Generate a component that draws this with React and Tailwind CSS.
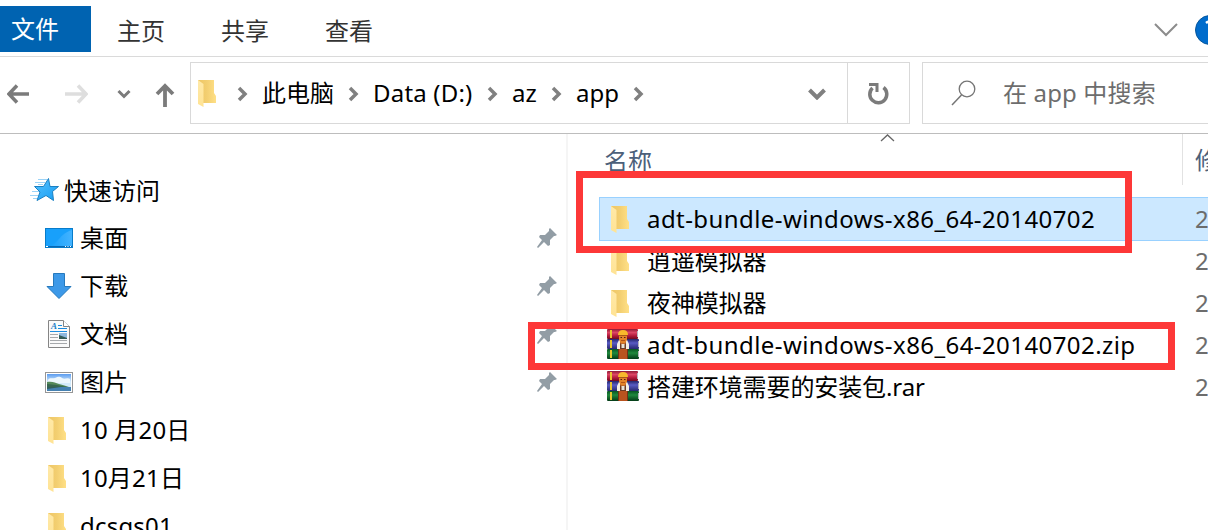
const FolderIcon = () => (
  <svg width="20" height="28" viewBox="0 0 20 28" className="shrink-0">
    <defs>
      <linearGradient id="folderBack" x1="0" y1="0" x2="1" y2="0">
        <stop offset="0" stopColor="#eec665" />
        <stop offset="0.5" stopColor="#f3cf71" />
        <stop offset="1" stopColor="#ffe087" />
      </linearGradient>
      <linearGradient id="folderFlap" x1="0" y1="0" x2="0" y2="1">
        <stop offset="0" stopColor="#ffe9a8" />
        <stop offset="1" stopColor="#ffe394" />
      </linearGradient>
    </defs>
    <path d="M1 1H17V14L19 17V24H1Z" fill="url(#folderBack)" />
    <path d="M1 1L6.500 5V28L1 25Z" fill="url(#folderFlap)" />
  </svg>
);

const StarIcon = () => (
  <svg width="30" height="26" viewBox="0 0 30 26" className="shrink-0">
    <defs>
      <linearGradient id="starFill" x1="0" y1="0" x2="1" y2="1">
        <stop offset="0" stopColor="#55c1ff" />
        <stop offset="1" stopColor="#179df2" />
      </linearGradient>
    </defs>
    <path
      d="M18.500 1.500L20 9.500H28.500L22.500 14.500L23.500 23.500L16 18.500L7 23.500L10 15L4.500 9.500H13.500Z"
      fill="url(#starFill)"
      stroke="#1b80c2"
      strokeWidth="1"
    />
    <path d="M8 2.500H17M5 5.500H15M8 7.500H13M2 14.500H9M0 18.500H8M3 21.500H7" stroke="#9bd3f7" strokeWidth="1" />
  </svg>
);

const DesktopIcon = () => (
  <svg width="28" height="20" viewBox="0 0 28 20" className="shrink-0">
    <defs>
      <linearGradient id="screenShine" x1="0" y1="0" x2="1" y2="0">
        <stop offset="0" stopColor="#18a0fb" />
        <stop offset="1" stopColor="#43b3ff" />
      </linearGradient>
    </defs>
    <rect x="0.500" y="0.500" width="27" height="19" fill="#18a0fb" stroke="#087cca" />
    <path d="M5 18C14 15 14 6 27 2V18Z" fill="url(#screenShine)" />
    <path d="M1 18.500H27" stroke="#0868b4" />
    <path d="M1 18.500H3M20 18.500H21M22.500 18.500H23.500M25 18.500H26" stroke="#fff" />
  </svg>
);

const DownloadIcon = () => (
  <svg width="28" height="28" viewBox="0 0 28 28" className="shrink-0">
    <path d="M8.500 1.500H19.500V14.500H26L14 26.500L2 14.500H8.500Z" fill="#3d99e8" stroke="#2679bd" />
  </svg>
);

const DocumentIcon = () => (
  <svg width="22" height="28" viewBox="0 0 22 28" className="shrink-0">
    <path d="M0.500 0.500H15L21.500 6.500V27.500H0.500Z" fill="#fafafa" stroke="#858585" />
    <path d="M15.500 0.500V6.500H21.500" fill="#fff" stroke="#858585" />
    <text x="3" y="9" fontSize="9" fontWeight="bold" fontStyle="italic" fontFamily="Liberation Serif, serif" fill="#1a80c8">A</text>
    <path d="M10 5.500H14M10 8.500H19M2 11.500H19" stroke="#1a8ce0" />
    <path d="M2 14.500H10M2 17.500H10M2 20.500H19M2 23.500H19" stroke="#a6a9ac" />
    <rect x="11" y="13" width="8" height="6" fill="#8fb9df" />
    <path d="M11 15L19 18V19H11Z" fill="#345d58" />
  </svg>
);

const PictureIcon = () => (
  <svg width="28" height="21" viewBox="0 0 28 21" className="shrink-0">
    <defs>
      <linearGradient id="sky" x1="0" y1="0" x2="0" y2="1">
        <stop offset="0" stopColor="#5b9cf0" />
        <stop offset="0.6" stopColor="#d4ebfb" />
        <stop offset="1" stopColor="#d4ebfb" />
      </linearGradient>
    </defs>
    <rect x="0.500" y="0.500" width="27" height="20" fill="#fff" stroke="#969696" />
    <rect x="2" y="2" width="24" height="13" fill="url(#sky)" />
    <path d="M3 8C5 5 7 7 10 6S14 4 17 6S22 5 25 7V11H3Z" fill="#edf7fd" />
    <path d="M2 10C8 9 10 11 14 12S21 14 24 15H2Z" fill="#568a5b" />
    <path d="M2 12L12 13L22 15H2Z" fill="#386750" />
    <rect x="2" y="15" width="24" height="4" fill="#4581b1" />
    <path d="M2 15H16L2 17Z" fill="#335f5b" />
  </svg>
);

const RarIcon = () => (
  <svg width="32" height="31" viewBox="0 0 32 31" className="mb-0.5 shrink-0">
    <defs>
      <linearGradient id="bookRed" x1="0" y1="0" x2="0" y2="1">
        <stop offset="0" stopColor="#8e1a35" />
        <stop offset="0.35" stopColor="#dc4565" />
        <stop offset="0.7" stopColor="#b0183a" />
        <stop offset="1" stopColor="#6d0a20" />
      </linearGradient>
      <linearGradient id="bookBlue" x1="0" y1="0" x2="0" y2="1">
        <stop offset="0" stopColor="#242569" />
        <stop offset="0.4" stopColor="#595bc4" />
        <stop offset="1" stopColor="#28286f" />
      </linearGradient>
      <linearGradient id="bookGreen" x1="0" y1="0" x2="0" y2="1">
        <stop offset="0" stopColor="#075522" />
        <stop offset="0.4" stopColor="#20893d" />
        <stop offset="1" stopColor="#043b17" />
      </linearGradient>
    </defs>
    <rect x="0" y="0" width="31" height="10" rx="1" fill="url(#bookRed)" />
    <rect x="0" y="10" width="32" height="10" rx="1" fill="url(#bookBlue)" />
    <rect x="0" y="20" width="32" height="10" rx="1" fill="url(#bookGreen)" />
    <path d="M30.500 2V8M31.500 12V18M31.500 22V28" stroke="#b9b9c0" />
    <path d="M4 1V9M4 11V19M4 21V29" stroke="#e9c62e" strokeWidth="2" />
    <rect x="11" y="19" width="10" height="11" fill="#b9531f" />
    <path d="M11.500 20V30M20.500 20V30" stroke="#743016" />
    <path d="M10 15L12 11H20L22 15V20H10Z" fill="#f3eee3" />
    <path d="M13 12H19V20H13Z" fill="#c26a2a" />
    <path d="M13 14L16 17L19 14V20H13Z" fill="#6d3c25" />
    <path d="M12 6H20V11L18 14H14L12 11Z" fill="#e38429" />
    <path d="M11 6Q11 1 16 1T21 6Z" fill="#f8b92c" />
    <path d="M12 6.500H20" stroke="#a85a16" />
    <path d="M13.500 8.500H15M17 8.500H18.500" stroke="#512313" />
    <path d="M14 11.500H18" stroke="#b45418" />
    <rect x="14.500" y="15" width="3" height="4" fill="#e9e4d8" />
  </svg>
);

const PinIcon = () => (
  <svg width="20" height="20" viewBox="0 0 20 20" className="shrink-0">
    <path d="M13 0L20 7L18 8L17 8L13 12V17L11 18L7 14L1 20L0 19L5 12L2 9L3 7H8L12 3V1Z" fill="#929da5" />
  </svg>
);

const Crumb = ({ className }) => (
  <svg width="11" height="16" viewBox="0 0 11 16" className={`shrink-0 ${className}`}>
    <path d="M2 2L8 8L2 14" fill="none" stroke="#808080" strokeWidth="3.500" />
  </svg>
);

const quickItems = [
  { name: '桌面', icon: <DesktopIcon />, pinned: true },
  { name: '下载', icon: <DownloadIcon />, pinned: true },
  { name: '文档', icon: <DocumentIcon />, pinned: true },
  { name: '图片', icon: <PictureIcon />, pinned: true },
  { name: '10 月20日', icon: <FolderIcon />, folder: true },
  { name: '10月21日', icon: <FolderIcon />, folder: true },
  { name: 'dcsgs01', icon: <FolderIcon />, folder: true }
];

const files = [
  { name: 'adt-bundle-windows-x86_64-20140702', type: 'folder', selected: true, latin: true },
  { name: '逍遥模拟器', type: 'folder' },
  { name: '夜神模拟器', type: 'folder' },
  { name: 'adt-bundle-windows-x86_64-20140702.zip', type: 'archive', latin: true },
  { name: '搭建环境需要的安装包.rar', type: 'archive' }
];

const Ribbon = () => (
  <div className="flex h-[57px] items-start border-b border-[#dadada] pt-1.5 text-[#333]">
    <div className="flex h-[46px] w-[91px] shrink-0 items-center bg-[#0063b1] pl-[11px] text-white">文件</div>
    <div className="flex h-[50px] items-center gap-14 pl-[26px]">
      <span>主页</span>
      <span>共享</span>
      <span>查看</span>
    </div>
    <div className="ml-auto flex h-12 shrink-0 items-center">
      <svg width="24" height="14" viewBox="0 0 24 14" className="mr-[17px]">
        <path d="M1 1L12 12L23 1" fill="none" stroke="#8c8c8c" strokeWidth="2" />
      </svg>
      <svg width="13" height="30" viewBox="0 0 13 30">
        <circle cx="15" cy="15" r="14.500" fill="#006ccc" stroke="#07569b" />
        <path d="M11 8Q13 6.500 15 6.500" fill="none" stroke="#fff" strokeWidth="2.500" />
      </svg>
    </div>
  </div>
);

const AddressBar = () => (
  <div className="flex h-[77px] items-start border-b border-[#bdbdbd] pt-[5px]">
    <div className="flex h-[62px] w-[190px] shrink-0 items-center pt-0.5 pl-[7px]">
      <svg width="22" height="20" viewBox="0 0 22 20">
        <path d="M10 1.500L2 10L10 18.500M2 10H22" fill="none" stroke="#7b7b7b" strokeWidth="3.500" />
      </svg>
      <svg width="23" height="20" viewBox="0 0 23 20" className="ml-9">
        <path d="M13 1.500L21 10L13 18.500M0 10H21" fill="none" stroke="#dedede" strokeWidth="3.500" />
      </svg>
      <svg width="14" height="10" viewBox="0 0 14 10" className="ml-[29px]">
        <path d="M1.500 2L7 7.500L12.500 2" fill="none" stroke="#7b7b7b" strokeWidth="3" />
      </svg>
      <svg width="20" height="24" viewBox="0 0 20 24" className="mt-0.5 ml-6">
        <path d="M2 11L10 3L18 11M10 3V24" fill="none" stroke="#7b7b7b" strokeWidth="3.800" />
      </svg>
    </div>
    <div className="flex h-[62px] w-[720px] shrink-0 border border-[#d9d9d9]">
      <div className="flex flex-1 items-center pl-1.5 text-black">
        <FolderIcon />
        <Crumb className="mt-0.5 ml-5" />
        <span className="ml-[14px] w-[72px]">此电脑</span>
        <Crumb className="mt-0.5 ml-[14px]" />
        <span className="ml-[14px] w-[101px] tracking-[0.2px] whitespace-nowrap">Data (D:)</span>
        <Crumb className="mt-0.5 ml-[13px]" />
        <span className="ml-[14px] w-[25px]">az</span>
        <Crumb className="mt-0.5 ml-[14px]" />
        <span className="ml-[14px] w-[43px]">app</span>
        <Crumb className="mt-0.5 ml-[14px]" />
        <svg width="18" height="12" viewBox="0 0 18 12" className="mt-0.5 mr-[21px] ml-auto">
          <path d="M1.500 2L9 9.500L16.500 2" fill="none" stroke="#808080" strokeWidth="4" />
        </svg>
      </div>
      <div className="flex w-[62px] items-center justify-center border-l border-[#d9d9d9]">
        <svg width="21" height="22" viewBox="0 0 21 22" className="mt-px">
          <path d="M15.500 4.500A8.500 8.500 0 1 1 4.500 5" fill="none" stroke="#7b7b7b" strokeWidth="3.500" />
          <path d="M1 1.500H9V9" fill="none" stroke="#7b7b7b" strokeWidth="3" />
        </svg>
      </div>
    </div>
    <div className="ml-3 flex h-[62px] flex-1 items-center border border-r-0 border-[#d9d9d9] pl-7 text-[#6d6d6d]">
      <svg width="26" height="26" viewBox="0 0 26 26" className="shrink-0">
        <circle cx="16" cy="9" r="7.800" fill="none" stroke="#757575" strokeWidth="1.300" />
        <path d="M10.500 15L1 25" stroke="#757575" strokeWidth="1.500" />
      </svg>
      <span className="ml-[26px] tracking-[0.15px] whitespace-nowrap">在 app 中搜索</span>
    </div>
  </div>
);

const Sidebar = () => (
  <aside className="w-[568px] shrink-0 border-r-2 border-[#f5f5f5] pt-8 text-black">
    <div className="flex h-12 items-center pl-[30px]">
      <StarIcon />
      <span className="ml-1 pt-0.5">快速访问</span>
    </div>
    {quickItems.map((item) => (
      <div key={item.name} className="flex h-12 items-center pr-[9px] pl-[45px]">
        <div className={`flex w-7 ${item.folder ? 'pl-0.5' : 'justify-center'}`}>{item.icon}</div>
        <span className="ml-[7px] flex-1 tracking-[0.2px]">{item.name}</span>
        {item.pinned && <PinIcon />}
      </div>
    ))}
  </aside>
);

const FileList = () => (
  <main className="min-w-0 flex-1">
    <div className="flex h-16 pl-9 text-[#4c607a]">
      <div className="flex h-[51px] w-[579px] shrink-0 items-center border-r border-[#e2e2e2]">
        <span className="w-[276px] pt-0.5">名称</span>
        <svg width="15" height="8" viewBox="0 0 15 8" className="self-start">
          <path d="M1 7L7.500 1L14 7" fill="none" stroke="#666" strokeWidth="1.300" />
        </svg>
      </div>
      <span className="pt-[10px] pl-3 whitespace-nowrap">修</span>
    </div>
    {files.map((file) => (
      <div
        key={file.name}
        className={`ml-[31px] flex items-center border-y border-l pl-[7px] ${
          file.selected ? '-my-px h-11 border-[#99d1ff] bg-[#cce8ff]' : 'h-[42px] border-transparent'
        }`}
      >
        <div className={`w-8 shrink-0 ${file.type === 'folder' ? 'pl-[3px]' : ''}`}>
          {file.type === 'folder' ? <FolderIcon /> : <RarIcon />}
        </div>
        <span
          className={`ml-2 w-[548px] shrink-0 whitespace-nowrap text-black ${
            file.latin ? 'tracking-[0.42px]' : 'tracking-[-0.1px]'
          }`}
        >
          {file.name}
        </span>
        <span className="text-[#6d6d6d]">2</span>
      </div>
    ))}
  </main>
);

const App = () => (
  <div className="relative flex h-[530px] w-[1208px] flex-col overflow-hidden bg-white font-['Noto_Sans','Noto_Sans_CJK_SC',sans-serif] text-2xl leading-8">
    <Ribbon />
    <AddressBar />
    <div className="flex min-h-0 flex-1">
      <Sidebar />
      <FileList />
    </div>
    {/* highlight frames over the folder and its archive */}
    <div className="absolute top-[171px] left-[576px] h-[82px] w-[556px] border-7 border-[#fd3838]" />
    <div className="absolute top-[322px] left-[528px] h-12 w-[647px] border-7 border-[#fd3838]" />
  </div>
);

export default App;
